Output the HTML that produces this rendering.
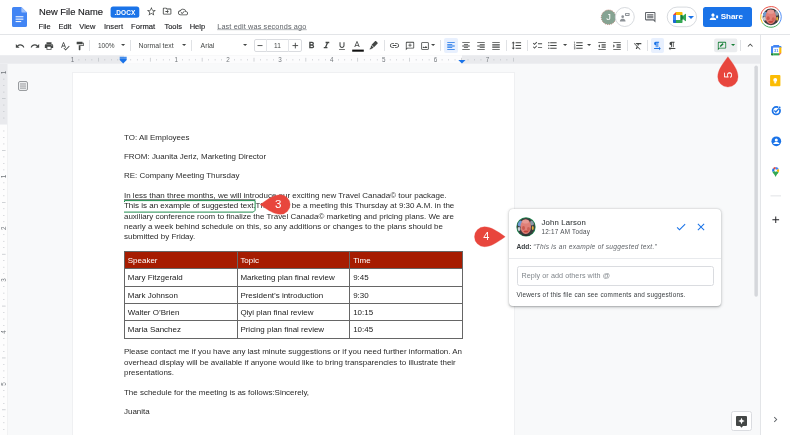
<!DOCTYPE html>
<html><head><meta charset="utf-8"><title>New File Name</title>
<style>
*{box-sizing:border-box;margin:0;padding:0}
html,body{width:790px;height:435px;overflow:hidden;background:#fff;font-family:"Liberation Sans",sans-serif;color:#202124}
.a{position:absolute}
svg{position:absolute;overflow:visible}
.t{position:absolute;white-space:nowrap;line-height:1}
#hdr{left:0;top:0;width:790px;height:34px;background:#fff}
#tb{left:0;top:34px;width:760px;height:22px;background:#fff;border-top:1px solid #e3e5e8}
.ic{fill:#444746}
.sep{position:absolute;top:40px;width:1px;height:11px;background:#e0e2e5}
#canvas{left:0;top:55px;width:760px;height:380px;background:#f8f9fa}
#ruler{left:0;top:55px;width:760px;height:9px;background:#e9ebee}
#vr{left:0;top:64px;width:8px;height:371px;background:#e9ebee}
#page{left:72px;top:72px;width:442.500px;height:363px;background:#fff;border:1px solid #eff0f2;border-bottom:0}
.doc{font-size:7.98px;line-height:10.43px;color:#2b2b2b;white-space:nowrap;position:absolute;left:124px}
#side{left:760px;top:34px;width:30px;height:401px;background:#fff;border-left:1px solid #e3e5e8;border-top:1px solid #e3e5e8}
table{position:absolute;left:124px;top:251px;border-collapse:collapse;font-size:7.98px;color:#1b1b1b}
td{border:1px solid #666;height:17.35px;padding:.5px 0 0 2.800px;vertical-align:middle;white-space:nowrap}
tr.h td{background:#a61c00;color:#fff}
.mk{fill:#e8463d;stroke:#e8463d;stroke-width:.3px;stroke-linejoin:round}
.mkt{fill:#fff;font-size:11.500px;stroke:none;font-family:"Liberation Sans",sans-serif}
#root{position:absolute;left:0;top:0;width:790px;height:435px;will-change:transform;opacity:.999}
</style></head><body><div id="root">
<div class="a" id="hdr"></div>
<!-- doc icon -->
<svg class="a" style="left:12px;top:7px" width="15" height="20" viewBox="0 0 15 20"><path d="M1.6 0H9.4L15 5.6V18.4A1.6 1.6 0 0 1 13.4 20H1.6A1.6 1.6 0 0 1 0 18.4V1.6A1.6 1.6 0 0 1 1.6 0Z" fill="#4285f4"/><path d="M9.4 0L15 5.6H10.6A1.2 1.2 0 0 1 9.4 4.4Z" fill="#a1c2fa"/><rect x="3.6" y="9.2" width="7.8" height="1.1" fill="#f1f6fe"/><rect x="3.6" y="11.6" width="7.8" height="1.1" fill="#f1f6fe"/><rect x="3.6" y="14" width="5.6" height="1.1" fill="#f1f6fe"/></svg>
<div class="t" style="left:39.300px;top:6.800px;font-size:9.800px;color:#202124;-webkit-text-stroke:.15px #202124;transform:scaleX(.955);transform-origin:0 0">New File Name</div>
<svg style="left:110px;top:6px" width="30" height="12.500" viewBox="0 0 30 12.500"><rect x=".6" y=".45" width="28.700" height="11.400" rx="2.500" fill="#1a73e8"/><text x="14.950" y="8.600" text-anchor="middle" font-size="6.500" font-weight="bold" fill="#fff" font-family="Liberation Sans, sans-serif" letter-spacing=".1">.DOCX</text></svg>
<svg style="left:146px;top:5.800px" width="10.800" height="10.800" viewBox="0 0 24 24"><path class="ic" d="M22 9.24l-7.19-.62L12 2 9.19 8.63 2 9.24l5.46 4.73L5.82 21 12 17.27 18.18 21l-1.63-7.03L22 9.24zM12 15.4l-3.76 2.27 1-4.28-3.32-2.88 4.38-.38L12 6.1l1.71 4.04 4.38.38-3.32 2.88 1 4.28L12 15.4z"/></svg>
<svg style="left:162.200px;top:6.200px" width="10.200" height="10.200" viewBox="0 0 24 24"><path class="ic" d="M20 6h-8l-2-2H4c-1.1 0-2 .9-2 2v12c0 1.1.9 2 2 2h16c1.1 0 2-.9 2-2V8c0-1.1-.9-2-2-2zm0 12H4V6h5.17l2 2H20v10zm-8-1l4-4-4-4v3H8v2h4v3z"/></svg>
<svg style="left:178.200px;top:6.500px" width="10" height="10" viewBox="0 0 24 24"><path class="ic" d="M19.35 10.04C18.67 6.59 15.64 4 12 4 9.11 4 6.6 5.64 5.35 8.04 2.34 8.36 0 10.91 0 14c0 3.31 2.69 6 6 6h13c2.76 0 5-2.24 5-5 0-2.64-2.05-4.78-4.65-4.96zM19 18H6c-2.21 0-4-1.79-4-4 0-2.05 1.53-3.76 3.56-3.97l1.07-.11.5-.95C8.08 7.14 9.94 6 12 6c2.62 0 4.88 1.86 5.39 4.43l.3 1.5 1.53.11c1.56.1 2.78 1.41 2.78 2.96 0 1.65-1.35 3-3 3zm-9-3.82l-2.09-2.09L6.5 13.5 10 17l6.01-6.01-1.41-1.41z"/></svg>
<!-- menu -->
<div class="t" style="left:38.600px;top:22.700px;font-size:7.5px;color:#202124;-webkit-text-stroke:.12px #202124">File</div>
<div class="t" style="left:58.500px;top:22.700px;font-size:7.5px;color:#202124;-webkit-text-stroke:.12px #202124">Edit</div>
<div class="t" style="left:79.300px;top:22.700px;font-size:7.5px;color:#202124;-webkit-text-stroke:.12px #202124">View</div>
<div class="t" style="left:104px;top:22.700px;font-size:7.600px;color:#202124;-webkit-text-stroke:.12px #202124">Insert</div>
<div class="t" style="left:131px;top:22.700px;font-size:7.650px;color:#202124;-webkit-text-stroke:.12px #202124">Format</div>
<div class="t" style="left:164.400px;top:22.700px;font-size:7.5px;color:#202124;-webkit-text-stroke:.12px #202124">Tools</div>
<div class="t" style="left:189.700px;top:22.700px;font-size:7.5px;color:#202124;-webkit-text-stroke:.12px #202124">Help</div>
<div class="t" style="left:217.2px;top:23.1px;font-size:7.3px;color:#5f6368;letter-spacing:.13px">Last edit was seconds ago</div>
<svg style="left:217px;top:28px" width="91" height="3" viewBox="0 0 91 3"><rect x=".2" y="1.500" width="89.600" height=".6" fill="#80868b"/></svg>
<!-- header right -->
<svg style="left:600px;top:8px" width="18" height="18" viewBox="0 0 18 18"><circle cx="8.600" cy="9.300" r="7.300" fill="#86a392" stroke="#b07a6c" stroke-width=".9" stroke-dasharray="1 1"/></svg>
<div class="t" style="left:606.200px;top:12.700px;font-size:9.300px;color:#fff">J</div>
<svg style="left:614px;top:6px" width="22" height="22" viewBox="0 0 22 22"><circle cx="10.800" cy="11" r="9.500" fill="#fff" stroke="#d3d6da" stroke-width=".9"/></svg>
<svg style="left:618px;top:11px" width="14" height="12" viewBox="0 0 14 12"><g fill="#8d9297"><circle cx="4.700" cy="5.700" r="1.350"/><path d="M1.900 9.900c0-1.600 1.900-2.200 2.800-2.200s2.800.6 2.800 2.200v.5H1.900z"/><rect x="7" y="1.900" width="4.600" height="3" rx=".7"/></g><rect x="8" y="2.900" width="2.600" height="1" fill="#fff"/></svg>
<svg style="left:643.700px;top:10.800px" width="12.500" height="12.500" viewBox="0 0 24 24"><path fill="#5f6368" d="M20 2H4c-1.100 0-2 .9-2 2v12c0 1.100.9 2 2 2h14l4 4V4c0-1.100-.9-2-2-2zm0 15.200L18.800 16H4V4h16v13.200zM6 6h12v2H6zm0 3h12v2H6zm0 3h12v2H6z"/></svg>
<svg style="left:666px;top:6px" width="32" height="22" viewBox="0 0 32 22"><rect x="1.200" y="1.100" width="29.400" height="19.600" rx="9.800" fill="#fff" stroke="#d3d6da" stroke-width=".9"/></svg>
<svg style="left:673px;top:11.5px" width="13" height="11" viewBox="0 0 26 22"><path d="M0 6L6 0V6Z" fill="#ea4335"/><path d="M6 0H17.500A1.500 1.500 0 0 1 19 1.500V6H6Z" fill="#fbbc04"/><path d="M0 6H6V16H0Z" fill="#4285f4"/><path d="M0 16H6V22H1.500A1.500 1.500 0 0 1 0 20.500Z" fill="#1967d2"/><path d="M6 16H19V20.500A1.500 1.500 0 0 1 17.500 22H6Z" fill="#34a853"/><path d="M19 6H15V16H19V13.500L24.500 18.200C25.100 18.700 26 18.300 26 17.500V4.500C26 3.700 25.100 3.300 24.500 3.800L19 8.500Z" fill="#34a853"/><path d="M15 6H19V8.500L21 11 19 13.500V16H15Z" fill="#188038"/></svg>
<svg style="left:688px;top:15.5px" width="6" height="3" viewBox="0 0 10 5"><path d="M0 0h10L5 5z" fill="#1a73e8"/></svg>
<div class="a" style="left:703px;top:7px;width:48.500px;height:19.500px;border-radius:2.500px;background:#1a73e8"></div>
<svg style="left:708.500px;top:12px" width="9.500" height="9.500" viewBox="0 0 24 24"><path fill="#fff" d="M10 12c2.200 0 4-1.800 4-4s-1.800-4-4-4-4 1.800-4 4 1.800 4 4 4zm0 2c-2.700 0-8 1.300-8 4v2h16v-2c0-2.700-5.300-4-8-4zm9-5h4v7h-5v-7z"/></svg>
<div class="t" style="left:720.800px;top:12.800px;font-size:8.100px;font-weight:bold;color:#fff;letter-spacing:-.1px">Share</div>
<!-- user avatar -->
<svg style="left:760px;top:6px" width="22" height="22" viewBox="0 0 43 43"><defs><clipPath id="cp1"><circle cx="21.400" cy="21.400" r="16.300"/></clipPath></defs><g fill="none" stroke-width="1.800"><path d="M1.89 16.17A20.2 20.2 0 0 1 36.87 8.42" stroke="#ea4335"/><path d="M36.87 8.42A20.2 20.2 0 0 1 37.95 32.99" stroke="#4285f4"/><path d="M37.95 32.99A20.2 20.2 0 0 1 4.85 32.99" stroke="#34a853"/><path d="M4.85 32.99A20.2 20.2 0 0 1 1.89 16.17" stroke="#fbbc04"/></g><g clip-path="url(#cp1)"><rect width="43" height="43" fill="#3d3d40"/><ellipse cx="10" cy="16" rx="5" ry="5" fill="#6f9ad0"/><ellipse cx="9" cy="25" rx="3.500" ry="4" fill="#c5c9ce"/><ellipse cx="33" cy="14" rx="4" ry="5" fill="#8f9ba8"/><ellipse cx="21" cy="21.500" rx="10.500" ry="14" fill="#e08078"/><ellipse cx="21" cy="11" rx="7" ry="4" fill="#e79a93"/><ellipse cx="16" cy="24" rx="3" ry="4" fill="#c95a50"/><ellipse cx="26" cy="26" rx="3" ry="4" fill="#cc6157"/><ellipse cx="21" cy="31" rx="5" ry="2" fill="#c0463c"/><ellipse cx="33.500" cy="25" rx="2" ry="4" fill="#e5b13a"/></g></svg>
<!-- toolbar -->
<div class="a" id="tb"></div>
<svg style="left:15px;top:40.500px" width="10" height="10" viewBox="0 0 24 24"><path class="ic" d="M12.500 8c-2.650 0-5.050.99-6.900 2.600L2 7v9h9l-3.620-3.620c1.390-1.160 3.160-1.880 5.120-1.880 3.540 0 6.550 2.310 7.600 5.500l2.370-.78C21.080 11.030 17.150 8 12.500 8z"/></svg>
<svg style="left:29.600px;top:40.500px" width="10" height="10" viewBox="0 0 24 24"><path class="ic" d="M18.400 10.600C16.550 8.990 14.150 8 11.500 8c-4.650 0-8.580 3.030-9.960 7.220L3.900 16c1.050-3.190 4.050-5.500 7.600-5.500 1.950 0 3.730.72 5.120 1.880L13 16h9V7l-3.600 3.600z"/></svg>
<svg style="left:44px;top:40.500px" width="10" height="10" viewBox="0 0 24 24"><path class="ic" d="M19 8H5c-1.660 0-3 1.340-3 3v6h4v4h12v-4h4v-6c0-1.660-1.340-3-3-3zm-3 11H8v-5h8v5zm3-7c-.55 0-1-.45-1-1s.45-1 1-1 1 .45 1 1-.45 1-1 1zm-1-9H6v4h12V3z"/></svg>
<svg style="left:59.600px;top:41px" width="10" height="10" viewBox="0 0 24 24"><path class="ic" d="M12.450 16h2.090L9.430 3H7.570L2.460 16h2.090l1.120-3h5.640l1.140 3zm-6.020-5L8.500 5.480 10.570 11H6.430zm15.160.59l-8.090 8.090L9.830 16l-1.410 1.410 5.090 5.090L23 13l-1.410-1.410z"/></svg>
<svg style="left:75.100px;top:40.500px" width="10" height="10" viewBox="0 0 24 24"><path class="ic" d="M18 4V3c0-.55-.45-1-1-1H5c-.55 0-1 .45-1 1v4c0 .55.45 1 1 1h12c.55 0 1-.45 1-1V6h1v4H9v11c0 .55.45 1 1 1h2c.55 0 1-.45 1-1v-9h8V4h-3z"/></svg>
<div class="sep" style="left:89px"></div>
<div class="t" style="left:98px;top:42.800px;font-size:6.500px;color:#444746">100%</div>
<svg style="left:120.9px;top:44.300px" width="4.200" height="2.100" viewBox="0 0 10 5"><path class="ic" d="M0 0h10L5 5z"/></svg>
<div class="sep" style="left:130px"></div>
<div class="t" style="left:138.600px;top:42.700px;font-size:6.850px;color:#444746">Normal text</div>
<svg style="left:181.9px;top:44.300px" width="4.200" height="2.100" viewBox="0 0 10 5"><path class="ic" d="M0 0h10L5 5z"/></svg>
<div class="sep" style="left:190.500px"></div>
<div class="t" style="left:200.600px;top:42.700px;font-size:6.900px;color:#444746">Arial</div>
<svg style="left:243.4px;top:44.300px" width="4.200" height="2.100" viewBox="0 0 10 5"><path class="ic" d="M0 0h10L5 5z"/></svg>
<div class="a" style="left:253.500px;top:38.500px;width:48px;height:13.500px;border:1px solid #dadce0;border-radius:2px"></div>
<div class="a" style="left:266px;top:39px;width:1px;height:12.500px;background:#e3e5e8"></div>
<div class="a" style="left:288px;top:39px;width:1px;height:12.500px;background:#e3e5e8"></div>
<svg style="left:257px;top:42px" width="6" height="7" viewBox="0 0 6 7"><rect x=".5" y="3.150" width="5" height=".9" fill="#444746"/></svg>
<div class="t" style="left:274px;top:42.800px;font-size:6.500px;color:#444746">11</div>
<svg style="left:292px;top:42px" width="7" height="7" viewBox="0 0 7 7"><rect x=".5" y="3.150" width="5.600" height=".9" fill="#444746"/><rect x="2.850" y=".8" width=".9" height="5.600" fill="#444746"/></svg>

<svg style="left:306px;top:40px" width="11" height="11" viewBox="0 0 24 24"><path class="ic" d="M15.600 10.790c.97-.67 1.650-1.770 1.650-2.790 0-2.260-1.750-4-4-4H7v14h7.040c2.090 0 3.710-1.700 3.710-3.790 0-1.520-.86-2.820-2.150-3.420zM10 6.500h3c.83 0 1.500.67 1.500 1.500s-.67 1.500-1.500 1.500h-3v-3zm3.500 9H10v-3h3.500c.83 0 1.500.67 1.500 1.500s-.67 1.500-1.500 1.500z"/></svg>
<svg style="left:321.400px;top:40px" width="11" height="11" viewBox="0 0 24 24"><path class="ic" d="M10 4v3h2.210l-3.420 8H6v3h8v-3h-2.210l3.420-8H18V4z"/></svg>
<svg style="left:337.400px;top:40.500px" width="10" height="10" viewBox="0 0 24 24"><path class="ic" d="M12 17c3.310 0 6-2.690 6-6V3h-2.500v8c0 1.930-1.570 3.500-3.500 3.500S8.500 12.930 8.500 11V3H6v8c0 3.310 2.690 6 6 6zm-7 2v2h14v-2H5z"/></svg>
<svg style="left:351.800px;top:40.300px" width="10" height="10" viewBox="0 0 24 24"><path class="ic" d="M11 3L5.500 17h2.250l1.120-3h6.250l1.120 3h2.250L13 3h-2zm-1.380 9L12 5.670 14.380 12H9.620z"/></svg>
<svg style="left:350px;top:48px" width="14" height="5" viewBox="0 0 14 5"><rect x="2.200" y="1.600" width="11.600" height="2.100" fill="#111"/></svg>
<svg style="left:367.500px;top:40px" width="10.500" height="10.500" viewBox="0 0 24 24"><path class="ic" d="M18.200 2.500l3.800 3.800c.5.500.5 1.200 0 1.700l-8.300 8.300-5.500-5.500 8.300-8.300c.5-.5 1.200-.5 1.700 0zM7.200 11.800l5.500 5.500-1.700 1.700-2.300.4-1.600 1.600H3l3.300-3.800.3-2.800z"/></svg>
<div class="sep" style="left:383.500px"></div>
<svg style="left:388.500px;top:40px" width="11" height="11" viewBox="0 0 24 24"><path class="ic" d="M3.900 12c0-1.710 1.390-3.100 3.100-3.100h4V7H7c-2.760 0-5 2.240-5 5s2.240 5 5 5h4v-1.900H7c-1.710 0-3.100-1.390-3.100-3.100zM8 13h8v-2H8v2zm9-6h-4v1.900h4c1.710 0 3.100 1.390 3.100 3.100s-1.390 3.100-3.100 3.100h-4V17h4c2.760 0 5-2.240 5-5s-2.240-5-5-5z"/></svg>
<svg style="left:404.800px;top:40.500px" width="10" height="10" viewBox="0 0 24 24"><path class="ic" d="M20 2H4c-1.100 0-2 .9-2 2v18l4-4h14c1.100 0 2-.9 2-2V4c0-1.100-.9-2-2-2zm0 14H5.200L4 17.200V4h16v12zM11 6h2v3h3v2h-3v3h-2v-3H8V9h3z"/></svg>
<svg style="left:419.500px;top:40.500px" width="10" height="10" viewBox="0 0 24 24"><path class="ic" d="M19 5v14H5V5h14m0-2H5c-1.100 0-2 .9-2 2v14c0 1.100.9 2 2 2h14c1.100 0 2-.9 2-2V5c0-1.100-.9-2-2-2zm-4.860 8.860l-3 3.870L9 13.140 6 17h12l-3.860-5.140z"/></svg>
<svg style="left:431.4px;top:44.300px" width="4.200" height="2.100" viewBox="0 0 10 5"><path class="ic" d="M0 0h10L5 5z"/></svg>
<div class="sep" style="left:440px"></div>
<div class="a" style="left:443.500px;top:38px;width:14.500px;height:14.500px;background:#e8f0fe;border-radius:2px"></div>
<svg style="left:446px;top:40.500px" width="10" height="10" viewBox="0 0 24 24"><path fill="#1a73e8" d="M15 15H3v2h12v-2zm0-8H3v2h12V7zM3 13h18v-2H3v2zm0 8h18v-2H3v2zM3 3v2h18V3H3z"/></svg>
<svg style="left:461px;top:40.500px" width="10" height="10" viewBox="0 0 24 24"><path class="ic" d="M7 15v2h10v-2H7zm-4 6h18v-2H3v2zm0-8h18v-2H3v2zm4-6v2h10V7H7zM3 3v2h18V3H3z"/></svg>
<svg style="left:475.500px;top:40.500px" width="10" height="10" viewBox="0 0 24 24"><path class="ic" d="M3 21h18v-2H3v2zm6-4h12v-2H9v2zm-6-4h18v-2H3v2zm6-4h12V7H9v2zM3 3v2h18V3H3z"/></svg>
<svg style="left:490.500px;top:40.500px" width="10" height="10" viewBox="0 0 24 24"><path class="ic" d="M3 21h18v-2H3v2zm0-4h18v-2H3v2zm0-4h18v-2H3v2zm0-4h18V7H3v2zm0-6v2h18V3H3z"/></svg>
<div class="sep" style="left:506px"></div>
<svg style="left:511.0px;top:40px" width="11" height="11" viewBox="0 0 24 24"><path class="ic" d="M6 7h2.500L5 3.500 1.500 7H4v10H1.500L5 20.500 8.500 17H6V7zm4-2v2h12V5H10zm0 14h12v-2H10v2zm0-6h12v-2H10v2z"/></svg>
<div class="sep" style="left:527px"></div>
<svg style="left:531.5px;top:40px" width="11" height="11" viewBox="0 0 24 24"><path class="ic" d="M22 7h-9v2h9V7zm0 8h-9v2h9v-2zM5.540 11L2 7.460l1.410-1.410 2.120 2.120 4.240-4.240 1.410 1.410L5.540 11zm0 8L2 15.460l1.410-1.410 2.120 2.120 4.240-4.240 1.410 1.410L5.540 19z"/></svg>
<svg style="left:547.0px;top:40px" width="11" height="11" viewBox="0 0 24 24"><path class="ic" d="M4 10.500c-.83 0-1.500.67-1.500 1.500s.67 1.500 1.500 1.500 1.500-.67 1.500-1.500-.67-1.500-1.500-1.500zm0-6c-.83 0-1.500.67-1.500 1.500S3.170 7.500 4 7.500 5.500 6.830 5.500 6 4.830 4.500 4 4.500zm0 12c-.83 0-1.500.68-1.500 1.500s.68 1.500 1.500 1.500 1.500-.68 1.500-1.500-.67-1.500-1.500-1.500zM7 19h14v-2H7v2zm0-6h14v-2H7v2zm0-8v2h14V5H7z"/></svg>
<svg style="left:562.9px;top:44.300px" width="4.200" height="2.100" viewBox="0 0 10 5"><path class="ic" d="M0 0h10L5 5z"/></svg>
<svg style="left:572.7px;top:40px" width="11" height="11" viewBox="0 0 24 24"><path class="ic" d="M2 17h2v.5H3v1h1v.5H2v1h3v-4H2v1zm1-9h1V4H2v1h1v3zm-1 3h1.800L2 13.100v.9h3v-1H3.200L5 10.900V10H2v1zm5-6v2h14V5H7zm0 14h14v-2H7v2zm0-6h14v-2H7v2z"/></svg>
<svg style="left:587.4px;top:44.300px" width="4.200" height="2.100" viewBox="0 0 10 5"><path class="ic" d="M0 0h10L5 5z"/></svg>
<svg style="left:597px;top:40.500px" width="10" height="10" viewBox="0 0 24 24"><path class="ic" d="M11 17h10v-2H11v2zm-8-5l4 4V8l-4 4zm0 9h18v-2H3v2zM3 3v2h18V3H3zm8 6h10V7H11v2zm0 4h10v-2H11v2z"/></svg>
<svg style="left:612px;top:40.500px" width="10" height="10" viewBox="0 0 24 24"><path class="ic" d="M3 21h18v-2H3v2zM3 8v8l4-4-4-4zm8 9h10v-2H11v2zM3 3v2h18V3H3zm8 6h10V7H11v2zm0 4h10v-2H11v2z"/></svg>
<div class="sep" style="left:627px"></div>
<svg style="left:632.500px;top:40.500px" width="10" height="10" viewBox="0 0 24 24"><path class="ic" d="M3.270 5L2 6.270l6.970 6.970L6.500 19h3l1.570-3.660L16.730 21 18 19.730 3.550 5.270 3.270 5zM6 5v.18L8.820 8h2.400l-.72 1.680 2.100 2.100L14.210 8H20V5H6z"/></svg>
<div class="sep" style="left:647px"></div>
<div class="a" style="left:650.500px;top:38px;width:13.500px;height:14.500px;background:#e8f0fe;border-radius:2px"></div>
<svg style="left:651.700px;top:40.500px" width="10" height="10" viewBox="0 0 24 24"><path fill="#1a73e8" d="M9 10v5h2V4h2v11h2V4h2V2H9C6.790 2 5 3.790 5 6s1.790 4 4 4zm12 8l-4-4v3H5v2h12v3l4-4z"/></svg>
<svg style="left:666.500px;top:40.500px" width="10" height="10" viewBox="0 0 24 24"><path class="ic" d="M10 10v5h2V4h2v11h2V4h2V2h-8C7.790 2 6 3.790 6 6s1.790 4 4 4zm-2 7v-3l-4 4 4 4v-3h12v-2H8z"/></svg>
<svg style="left:713px;top:37px" width="26" height="17" viewBox="0 0 26 17"><rect x="1.100" y="1.600" width="23.200" height="13.600" rx="2" fill="#ebedef"/></svg>
<svg style="left:716.500px;top:40.500px" width="10" height="10" viewBox="0 0 24 24"><path fill="#188038" d="M20 2H4c-1.100 0-2 .9-2 2v18l4-4h14c1.100 0 2-.9 2-2V4c0-1.100-.9-2-2-2zm0 14H5.200L4 17.200V4h16v12zM7 14h2.500l6.500-6.500L13.500 5 7 11.500V14z"/></svg>
<svg style="left:730.9px;top:44.300px" width="4.200" height="2.100" viewBox="0 0 10 5"><path fill="#188038" d="M0 0h10L5 5z"/></svg>
<div class="sep" style="left:739.700px"></div>
<svg style="left:745px;top:40px" width="10.500" height="10.500" viewBox="0 0 24 24"><path class="ic" d="M12 8l-6 6 1.410 1.410L12 10.830l4.590 4.590L18 14z"/></svg>
<!-- canvas -->
<div class="a" id="canvas"></div>
<svg class="a" style="left:0;top:55px" width="760" height="9" viewBox="0 0 760 9">
<rect x="0" y="0.3" width="760" height="8.400" fill="#e9eaed"/>
<rect x="124" y="0.3" width="338" height="8.400" fill="#fcfcfd"/>
<text x="72.4" y="7" font-size="6.300" fill="#74797e" text-anchor="middle" font-family="Liberation Sans, sans-serif">1</text>
<rect x="78.61" y="4.200" width=".6" height="1.200" fill="#b3b7bd"/>
<rect x="85.09" y="4.200" width=".6" height="1.200" fill="#b3b7bd"/>
<rect x="91.58" y="4.200" width=".6" height="1.200" fill="#b3b7bd"/>
<rect x="98.06" y="2.800" width=".6" height="3.800" fill="#b3b7bd"/>
<rect x="104.55" y="4.200" width=".6" height="1.200" fill="#b3b7bd"/>
<rect x="111.03" y="4.200" width=".6" height="1.200" fill="#b3b7bd"/>
<rect x="117.52" y="4.200" width=".6" height="1.200" fill="#b3b7bd"/>
<rect x="130.48" y="4.200" width=".6" height="1.200" fill="#b3b7bd"/>
<rect x="136.97" y="4.200" width=".6" height="1.200" fill="#b3b7bd"/>
<rect x="143.45" y="4.200" width=".6" height="1.200" fill="#b3b7bd"/>
<rect x="149.94" y="2.800" width=".6" height="3.800" fill="#b3b7bd"/>
<rect x="156.42" y="4.200" width=".6" height="1.200" fill="#b3b7bd"/>
<rect x="162.91" y="4.200" width=".6" height="1.200" fill="#b3b7bd"/>
<rect x="169.39" y="4.200" width=".6" height="1.200" fill="#b3b7bd"/>
<text x="176.2" y="7" font-size="6.300" fill="#74797e" text-anchor="middle" font-family="Liberation Sans, sans-serif">1</text>
<rect x="182.36" y="4.200" width=".6" height="1.200" fill="#b3b7bd"/>
<rect x="188.85" y="4.200" width=".6" height="1.200" fill="#b3b7bd"/>
<rect x="195.33" y="4.200" width=".6" height="1.200" fill="#b3b7bd"/>
<rect x="201.82" y="2.800" width=".6" height="3.800" fill="#b3b7bd"/>
<rect x="208.30" y="4.200" width=".6" height="1.200" fill="#b3b7bd"/>
<rect x="214.79" y="4.200" width=".6" height="1.200" fill="#b3b7bd"/>
<rect x="221.27" y="4.200" width=".6" height="1.200" fill="#b3b7bd"/>
<text x="228.1" y="7" font-size="6.300" fill="#74797e" text-anchor="middle" font-family="Liberation Sans, sans-serif">2</text>
<rect x="234.24" y="4.200" width=".6" height="1.200" fill="#b3b7bd"/>
<rect x="240.73" y="4.200" width=".6" height="1.200" fill="#b3b7bd"/>
<rect x="247.21" y="4.200" width=".6" height="1.200" fill="#b3b7bd"/>
<rect x="253.70" y="2.800" width=".6" height="3.800" fill="#b3b7bd"/>
<rect x="260.18" y="4.200" width=".6" height="1.200" fill="#b3b7bd"/>
<rect x="266.67" y="4.200" width=".6" height="1.200" fill="#b3b7bd"/>
<rect x="273.15" y="4.200" width=".6" height="1.200" fill="#b3b7bd"/>
<text x="279.9" y="7" font-size="6.300" fill="#74797e" text-anchor="middle" font-family="Liberation Sans, sans-serif">3</text>
<rect x="286.12" y="4.200" width=".6" height="1.200" fill="#b3b7bd"/>
<rect x="292.60" y="4.200" width=".6" height="1.200" fill="#b3b7bd"/>
<rect x="299.09" y="4.200" width=".6" height="1.200" fill="#b3b7bd"/>
<rect x="305.57" y="2.800" width=".6" height="3.800" fill="#b3b7bd"/>
<rect x="312.06" y="4.200" width=".6" height="1.200" fill="#b3b7bd"/>
<rect x="318.54" y="4.200" width=".6" height="1.200" fill="#b3b7bd"/>
<rect x="325.03" y="4.200" width=".6" height="1.200" fill="#b3b7bd"/>
<text x="331.8" y="7" font-size="6.300" fill="#74797e" text-anchor="middle" font-family="Liberation Sans, sans-serif">4</text>
<rect x="338.00" y="4.200" width=".6" height="1.200" fill="#b3b7bd"/>
<rect x="344.48" y="4.200" width=".6" height="1.200" fill="#b3b7bd"/>
<rect x="350.97" y="4.200" width=".6" height="1.200" fill="#b3b7bd"/>
<rect x="357.45" y="2.800" width=".6" height="3.800" fill="#b3b7bd"/>
<rect x="363.94" y="4.200" width=".6" height="1.200" fill="#b3b7bd"/>
<rect x="370.42" y="4.200" width=".6" height="1.200" fill="#b3b7bd"/>
<rect x="376.91" y="4.200" width=".6" height="1.200" fill="#b3b7bd"/>
<text x="383.7" y="7" font-size="6.300" fill="#74797e" text-anchor="middle" font-family="Liberation Sans, sans-serif">5</text>
<rect x="389.88" y="4.200" width=".6" height="1.200" fill="#b3b7bd"/>
<rect x="396.36" y="4.200" width=".6" height="1.200" fill="#b3b7bd"/>
<rect x="402.85" y="4.200" width=".6" height="1.200" fill="#b3b7bd"/>
<rect x="409.33" y="2.800" width=".6" height="3.800" fill="#b3b7bd"/>
<rect x="415.82" y="4.200" width=".6" height="1.200" fill="#b3b7bd"/>
<rect x="422.30" y="4.200" width=".6" height="1.200" fill="#b3b7bd"/>
<rect x="428.79" y="4.200" width=".6" height="1.200" fill="#b3b7bd"/>
<text x="435.6" y="7" font-size="6.300" fill="#74797e" text-anchor="middle" font-family="Liberation Sans, sans-serif">6</text>
<rect x="441.76" y="4.200" width=".6" height="1.200" fill="#b3b7bd"/>
<rect x="448.24" y="4.200" width=".6" height="1.200" fill="#b3b7bd"/>
<rect x="454.72" y="4.200" width=".6" height="1.200" fill="#b3b7bd"/>
<rect x="461.21" y="2.800" width=".6" height="3.800" fill="#b3b7bd"/>
<rect x="467.69" y="4.200" width=".6" height="1.200" fill="#b3b7bd"/>
<rect x="474.18" y="4.200" width=".6" height="1.200" fill="#b3b7bd"/>
<rect x="480.66" y="4.200" width=".6" height="1.200" fill="#b3b7bd"/>
<text x="487.4" y="7" font-size="6.300" fill="#74797e" text-anchor="middle" font-family="Liberation Sans, sans-serif">7</text>
<rect x="493.63" y="4.200" width=".6" height="1.200" fill="#b3b7bd"/>
<rect x="500.12" y="4.200" width=".6" height="1.200" fill="#b3b7bd"/>
<rect x="506.60" y="4.200" width=".6" height="1.200" fill="#b3b7bd"/>
<rect x="513.09" y="2.800" width=".6" height="3.800" fill="#b3b7bd"/>
<path d="M119.700 3.300h7v1.800l-3.500 3.500-3.500-3.500z" fill="#1a73e8"/><rect x="119.700" y="1.800" width="7" height="1" fill="#1a73e8"/>
<path d="M458.300 5h7.200l-3.600 3.500z" fill="#1a73e8"/>
</svg>
<svg class="a" style="left:0;top:64px" width="8" height="371" viewBox="0 0 8 371">
<rect x="0" y="0" width="7.200" height="60.700" fill="#e9eaed"/><rect x="0" y="60.700" width="7.200" height="311" fill="#fdfdfd"/><rect x="7.200" y="0" width=".8" height="371" fill="#eff0f2"/>
<text transform="translate(6.100 8.6) rotate(-90)" font-size="6.300" fill="#74797e" text-anchor="middle" font-family="Liberation Sans, sans-serif">1</text>
<rect x="3.200" y="14.81" width="1.200" height=".6" fill="#b3b7bd"/>
<rect x="3.200" y="21.29" width="1.200" height=".6" fill="#b3b7bd"/>
<rect x="3.200" y="27.78" width="1.200" height=".6" fill="#b3b7bd"/>
<rect x="2" y="34.26" width="3.600" height=".6" fill="#b3b7bd"/>
<rect x="3.200" y="40.75" width="1.200" height=".6" fill="#b3b7bd"/>
<rect x="3.200" y="47.23" width="1.200" height=".6" fill="#b3b7bd"/>
<rect x="3.200" y="53.72" width="1.200" height=".6" fill="#b3b7bd"/>
<rect x="3.200" y="66.68" width="1.200" height=".6" fill="#b3b7bd"/>
<rect x="3.200" y="73.17" width="1.200" height=".6" fill="#b3b7bd"/>
<rect x="3.200" y="79.65" width="1.200" height=".6" fill="#b3b7bd"/>
<rect x="2" y="86.14" width="3.600" height=".6" fill="#b3b7bd"/>
<rect x="3.200" y="92.62" width="1.200" height=".6" fill="#b3b7bd"/>
<rect x="3.200" y="99.11" width="1.200" height=".6" fill="#b3b7bd"/>
<rect x="3.200" y="105.59" width="1.200" height=".6" fill="#b3b7bd"/>
<text transform="translate(6.100 112.4) rotate(-90)" font-size="6.300" fill="#74797e" text-anchor="middle" font-family="Liberation Sans, sans-serif">1</text>
<rect x="3.200" y="118.56" width="1.200" height=".6" fill="#b3b7bd"/>
<rect x="3.200" y="125.05" width="1.200" height=".6" fill="#b3b7bd"/>
<rect x="3.200" y="131.53" width="1.200" height=".6" fill="#b3b7bd"/>
<rect x="2" y="138.02" width="3.600" height=".6" fill="#b3b7bd"/>
<rect x="3.200" y="144.50" width="1.200" height=".6" fill="#b3b7bd"/>
<rect x="3.200" y="150.99" width="1.200" height=".6" fill="#b3b7bd"/>
<rect x="3.200" y="157.47" width="1.200" height=".6" fill="#b3b7bd"/>
<text transform="translate(6.100 164.3) rotate(-90)" font-size="6.300" fill="#74797e" text-anchor="middle" font-family="Liberation Sans, sans-serif">2</text>
<rect x="3.200" y="170.44" width="1.200" height=".6" fill="#b3b7bd"/>
<rect x="3.200" y="176.93" width="1.200" height=".6" fill="#b3b7bd"/>
<rect x="3.200" y="183.41" width="1.200" height=".6" fill="#b3b7bd"/>
<rect x="2" y="189.90" width="3.600" height=".6" fill="#b3b7bd"/>
<rect x="3.200" y="196.38" width="1.200" height=".6" fill="#b3b7bd"/>
<rect x="3.200" y="202.87" width="1.200" height=".6" fill="#b3b7bd"/>
<rect x="3.200" y="209.35" width="1.200" height=".6" fill="#b3b7bd"/>
<text transform="translate(6.100 216.1) rotate(-90)" font-size="6.300" fill="#74797e" text-anchor="middle" font-family="Liberation Sans, sans-serif">3</text>
<rect x="3.200" y="222.32" width="1.200" height=".6" fill="#b3b7bd"/>
<rect x="3.200" y="228.80" width="1.200" height=".6" fill="#b3b7bd"/>
<rect x="3.200" y="235.29" width="1.200" height=".6" fill="#b3b7bd"/>
<rect x="2" y="241.77" width="3.600" height=".6" fill="#b3b7bd"/>
<rect x="3.200" y="248.26" width="1.200" height=".6" fill="#b3b7bd"/>
<rect x="3.200" y="254.74" width="1.200" height=".6" fill="#b3b7bd"/>
<rect x="3.200" y="261.23" width="1.200" height=".6" fill="#b3b7bd"/>
<text transform="translate(6.100 268.0) rotate(-90)" font-size="6.300" fill="#74797e" text-anchor="middle" font-family="Liberation Sans, sans-serif">4</text>
<rect x="3.200" y="274.20" width="1.200" height=".6" fill="#b3b7bd"/>
<rect x="3.200" y="280.68" width="1.200" height=".6" fill="#b3b7bd"/>
<rect x="3.200" y="287.17" width="1.200" height=".6" fill="#b3b7bd"/>
<rect x="2" y="293.65" width="3.600" height=".6" fill="#b3b7bd"/>
<rect x="3.200" y="300.14" width="1.200" height=".6" fill="#b3b7bd"/>
<rect x="3.200" y="306.62" width="1.200" height=".6" fill="#b3b7bd"/>
<rect x="3.200" y="313.11" width="1.200" height=".6" fill="#b3b7bd"/>
<text transform="translate(6.100 319.9) rotate(-90)" font-size="6.300" fill="#74797e" text-anchor="middle" font-family="Liberation Sans, sans-serif">5</text>
<rect x="3.200" y="326.08" width="1.200" height=".6" fill="#b3b7bd"/>
<rect x="3.200" y="332.56" width="1.200" height=".6" fill="#b3b7bd"/>
<rect x="3.200" y="339.05" width="1.200" height=".6" fill="#b3b7bd"/>
<rect x="2" y="345.53" width="3.600" height=".6" fill="#b3b7bd"/>
<rect x="3.200" y="352.02" width="1.200" height=".6" fill="#b3b7bd"/>
<rect x="3.200" y="358.50" width="1.200" height=".6" fill="#b3b7bd"/>
<rect x="3.200" y="364.99" width="1.200" height=".6" fill="#b3b7bd"/>
</svg>
<!-- outline icon -->
<svg style="left:18px;top:80.600px" width="10" height="10" viewBox="0 0 20 20"><rect x="1.200" y="1.200" width="17.600" height="17.600" rx="2.500" fill="none" stroke="#6b6f73" stroke-width="1.500"/><rect x="4" y="5.200" width="12" height="1.500" fill="#6b6f73"/><rect x="4" y="9.300" width="12" height="1.500" fill="#6b6f73"/><rect x="4" y="13.400" width="12" height="1.500" fill="#6b6f73"/></svg>
<div class="a" id="page"></div>
<!-- document text -->
<div class="doc" style="top:133px">TO: All Employees</div>
<div class="doc" style="top:152.300px">FROM: Juanita Jeriz, Marketing Director</div>
<div class="doc" style="top:171.400px">RE: Company Meeting Thursday</div>
<div class="doc" style="top:190.700px">In less than three months, we will introduce our exciting new Travel Canada© tour package.<br><span style="color:#1b1b1b">This is an example of suggested text.</span>There will be a meeting this Thursday at 9:30 A.M. in the<br>auxiliary conference room to finalize the Travel Canada© marketing and pricing plans. We are<br>nearly a week behind schedule on this, so any additions or changes to the plans should be<br>submitted by Friday.</div>
<svg style="left:124px;top:198px" width="150" height="3" viewBox="0 0 150 3"><rect x="0" y="1.300" width="131.500" height=".8" fill="#555"/></svg>
<svg style="left:124px;top:198px" width="134" height="16" viewBox="0 0 134 16"><path d="M.5 4V2.600H131.100V12.300L129.300 14.100H0" fill="none" stroke="#1e8e4e" stroke-width="1"/></svg>
<table><tr class="h"><td style="width:112.600px">Speaker</td><td style="width:112.800px">Topic</td><td style="width:112.800px">Time</td></tr>
<tr><td>Mary Fitzgerald</td><td>Marketing plan final review</td><td>9:45</td></tr>
<tr><td>Mark Johnson</td><td>President’s introduction</td><td>9:30</td></tr>
<tr><td>Walter O’Brien</td><td>Qiyi plan final review</td><td>10:15</td></tr>
<tr><td>Maria Sanchez</td><td>Pricing plan final review</td><td>10:45</td></tr></table>
<div class="doc" style="top:347.300px">Please contact me if you have any last minute suggestions or if you need further information. An<br>overhead display will be available if anyone would like to bring transparencies to illustrate their<br>presentations.</div>
<div class="doc" style="top:387.600px">The schedule for the meeting is as follows:Sincerely,</div>
<div class="doc" style="top:407.100px">Juanita</div>
<!-- marker 3 -->
<svg style="left:257px;top:192px" width="36" height="24" viewBox="0 0 36 24"><path class="mk" d="M23.40 2.84C17.01 2.84 11.49 6.68 3.10 12.60C11.49 18.52 17.01 22.36 23.40 22.36A9.76 9.76 0 0 0 23.40 2.84Z"/><text class="mkt" x="21.300" y="16.400" text-anchor="middle">3</text></svg>
<!-- comment card -->
<div class="a" style="left:509px;top:209px;width:212px;height:97px;background:#fff;border-radius:4px;box-shadow:0 .5px 1.500px rgba(60,64,67,.3),0 1px 3px 1px rgba(60,64,67,.15)"></div>
<svg style="left:516px;top:217px" width="20" height="20" viewBox="0 0 40 40"><defs><clipPath id="cp2"><circle cx="20" cy="20" r="17.800"/></clipPath></defs><circle cx="20" cy="19.800" r="19.300" fill="#1c8a50"/><g clip-path="url(#cp2)"><rect width="40" height="40" fill="#3b3b3d"/><ellipse cx="8" cy="13" rx="5" ry="6" fill="#6d9bd6"/><ellipse cx="32" cy="12" rx="4" ry="5" fill="#8e9aa6"/><ellipse cx="6" cy="24" rx="3" ry="4" fill="#c9cdd2"/><ellipse cx="19.500" cy="19.500" rx="10.500" ry="14.500" fill="#e08078"/><ellipse cx="19" cy="9" rx="7" ry="4" fill="#e79a93"/><ellipse cx="15" cy="22" rx="3" ry="4" fill="#c95a50"/><ellipse cx="25" cy="24" rx="3" ry="4" fill="#cc6157"/><ellipse cx="20" cy="29" rx="5" ry="2" fill="#c0463c"/><ellipse cx="33.500" cy="22" rx="2" ry="4" fill="#e5b13a"/><ellipse cx="20" cy="39" rx="14" ry="4" fill="#2c2c2e"/></g></svg>
<div class="t" style="left:541.600px;top:219.100px;font-size:7.700px;color:#3c4043;letter-spacing:.18px;-webkit-text-stroke:.1px #3c4043">John Larson</div>
<div class="t" style="left:541.600px;top:228.900px;font-size:6.300px;color:#4a4e52;letter-spacing:.25px">12:17 AM Today</div>
<svg style="left:674.500px;top:221px" width="12" height="12" viewBox="0 0 24 24"><path fill="#1a73e8" d="M9 16.170L4.830 12l-1.420 1.410L9 19 21 7l-1.410-1.410z"/></svg>
<svg style="left:695px;top:221px" width="12" height="12" viewBox="0 0 24 24"><path fill="#1a73e8" d="M19 6.410L17.590 5 12 10.590 6.410 5 5 6.410 10.590 12 5 17.590 6.410 19 12 13.410 17.590 19 19 17.590 13.410 12z"/></svg>
<div class="t" style="left:516.400px;top:243.800px;font-size:6.600px;color:#3c4043"><b>Add:</b> <i style="color:#5f6368;letter-spacing:.27px">“This is an example of suggested text.”</i></div>
<div class="a" style="left:509px;top:258px;width:212px;height:1px;background:#e8eaed"></div>
<div class="a" style="left:516.500px;top:265.500px;width:197px;height:20px;border:1px solid #dadce0;border-radius:2.500px;background:#fff"></div>
<div class="t" style="left:521.500px;top:272px;font-size:7.200px;color:#80868b;letter-spacing:.07px">Reply or add others with @</div>
<div class="t" style="left:516.400px;top:291.800px;font-size:6.400px;color:#3c4043;letter-spacing:.23px">Viewers of this file can see comments and suggestions.</div>
<!-- marker 4 -->
<svg style="left:472px;top:224px" width="36" height="24" viewBox="0 0 36 24"><path class="mk" d="M12.40 22.69C18.90 22.69 24.60 18.78 33.20 12.76C24.60 6.74 18.90 2.83 12.40 2.83A9.93 9.93 0 0 0 12.40 22.69Z"/><text class="mkt" x="14.300" y="16.200" text-anchor="middle" style="font-size:11px">4</text></svg>
<!-- scrollbar -->
<svg style="left:753px;top:64px" width="6" height="234" viewBox="0 0 6 234"><rect x="1.400" y="1.500" width="3.500" height="231.300" rx="1.750" fill="#d5d7db"/></svg>
<!-- marker 5 -->
<svg style="left:716px;top:56px" width="24" height="34" viewBox="0 0 24 34"><path class="mk" d="M22.03 20.90C22.03 14.27 18.04 9.05 11.90 0.70C5.76 9.05 1.77 14.27 1.77 20.90A10.13 10.13 0 0 0 22.03 20.90Z"/><text class="mkt" transform="translate(15.800 19) rotate(-90)" text-anchor="middle">5</text></svg>
<!-- explore -->
<div class="a" style="left:731px;top:411px;width:21px;height:20px;background:#fff;border:1px solid #dadce0;border-radius:2.500px"></div>
<svg style="left:736.200px;top:415.500px" width="11" height="12" viewBox="0 0 22 24"><path fill="#444746" d="M2 0h18a2 2 0 0 1 2 2v16a2 2 0 0 1-2 2h-6l-3 3.500L8 20H2a2 2 0 0 1-2-2V2a2 2 0 0 1 2-2z"/><path fill="#fff" d="M11 3.500l1.900 4.600 4.600 1.900-4.600 1.900L11 16.500 9.100 11.900 4.500 10l4.600-1.900z"/></svg>
<!-- side panel -->
<div class="a" id="side"></div>
<svg style="left:770.700px;top:44.600px" width="10.400" height="10.400" viewBox="0 0 23 23"><path d="M5 0h13v5H5z" fill="#4285f4"/><path d="M0 5a2 2 0 0 1 2-2h3v15H0z" fill="#4285f4"/><path d="M18 3h3a2 2 0 0 1 2 2v0H18z" fill="#1967d2"/><path d="M2 3h19a2 2 0 0 1 2 2v1H0V5a2 2 0 0 1 2-2z" fill="#4285f4"/><path d="M18 5h5v13h-5z" fill="#fbbc04"/><path d="M0 18h5v5H2a2 2 0 0 1-2-2z" fill="#188038"/><path d="M5 18h13v5H5z" fill="#34a853"/><path d="M18 18h5l-5 5z" fill="#ea4335"/><rect x="5" y="6" width="13" height="12" fill="#fff"/><text x="11.500" y="16" font-size="9" font-weight="bold" fill="#4285f4" text-anchor="middle" font-family="Liberation Sans, sans-serif">31</text></svg>
<svg style="left:770.300px;top:74.600px" width="10.500" height="11.300" viewBox="0 0 21 23"><rect width="21" height="23" rx="2" fill="#fbbc04"/><circle cx="10.500" cy="10" r="4" fill="#fff"/><rect x="8.500" y="14.500" width="4" height="2.500" fill="#fff"/></svg>
<svg style="left:770.700px;top:105.200px" width="10.600" height="10.600" viewBox="0 0 24 24"><circle cx="12" cy="13" r="8.500" fill="none" stroke="#1a73e8" stroke-width="4"/><path d="M7.500 12.500l3.500 3.500 8-9" fill="none" stroke="#1a73e8" stroke-width="3"/><circle cx="20" cy="5" r="3.500" fill="#fff"/><circle cx="19.500" cy="5.500" r="2.200" fill="#1a73e8"/></svg>
<svg style="left:770.700px;top:136.200px" width="10.600" height="10.600" viewBox="0 0 24 24"><circle cx="12" cy="12" r="11" fill="#1a73e8"/><circle cx="12" cy="9" r="3.500" fill="#fff"/><path d="M5 18c0-3 4.500-4.500 7-4.500s7 1.500 7 4.500z" fill="#fff"/></svg>
<svg style="left:772.200px;top:166.600px" width="7.300" height="10" viewBox="0 0 17 24"><path d="M8.500 0A8.500 8.500 0 0 0 2 3l6.500 5.500z" fill="#ea4335"/><path d="M2 3A8.500 8.500 0 0 0 .8 12l7.700-3.500z" fill="#1a73e8"/><path d="M8.500 0a8.500 8.500 0 0 1 7.500 4.500l-7.500 4z" fill="#4285f4"/><path d="M16 4.500a8.500 8.500 0 0 1-.5 8.500L8.500 8.500z" fill="#fbbc04"/><path d="M.8 12C3 16 6.500 18 8.500 24c2-6 5-8 7-11L8.500 8.500z" fill="#34a853"/><circle cx="8.500" cy="8.500" r="3" fill="#fff"/></svg>
<svg style="left:770px;top:194px" width="12" height="4" viewBox="0 0 12 4"><rect x=".5" y="1.500" width="10.500" height=".8" fill="#dadce0"/></svg>
<svg style="left:770px;top:214px" width="11.500" height="11.500" viewBox="0 0 24 24"><path fill="#202124" d="M19 13h-6v6h-2v-6H5v-2h6V5h2v6h6v2z"/></svg>
<svg style="left:769.800px;top:414px" width="11" height="11" viewBox="0 0 24 24"><path fill="#5f6368" d="M10 6L8.590 7.410 13.170 12l-4.580 4.590L10 18l6-6z"/></svg>
</div></body></html>
